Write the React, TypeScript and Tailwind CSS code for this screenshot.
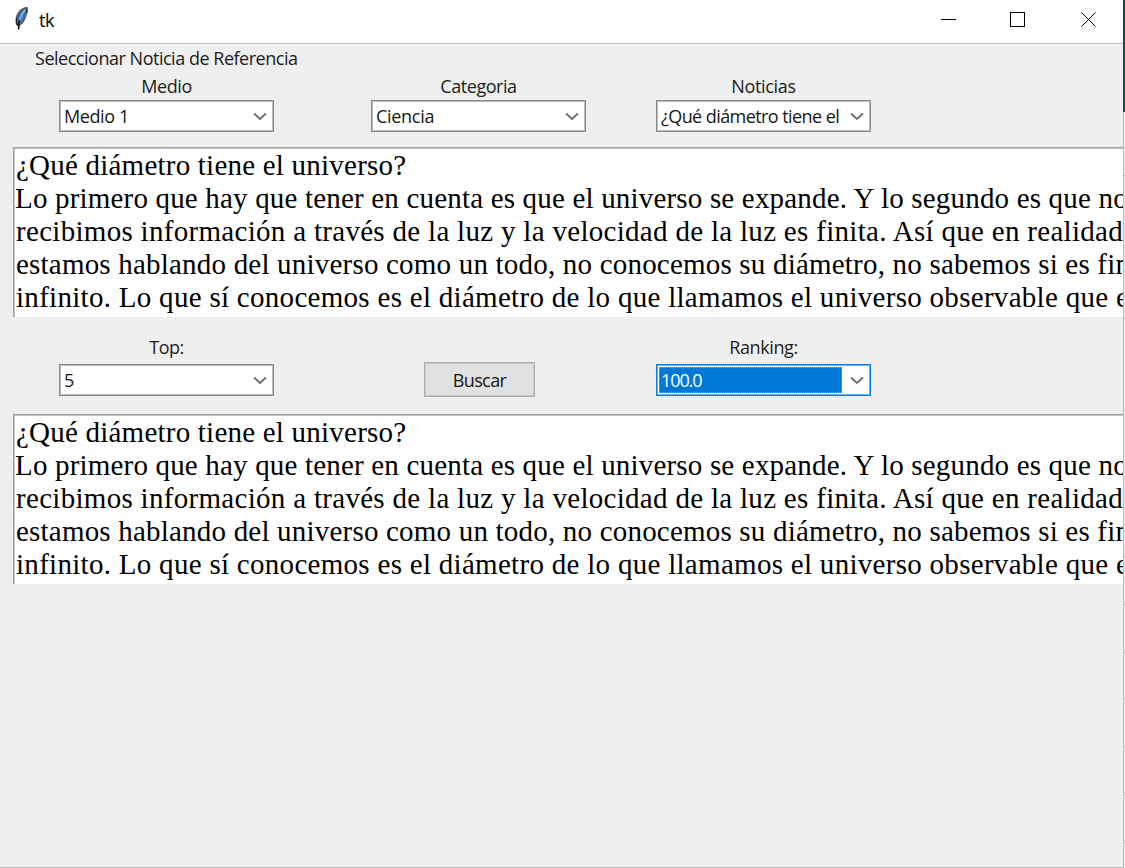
const ui = "font-['Open_Sans','Noto_Sans',sans-serif] text-[18px] whitespace-pre";

function Chevron() {
  return (
    <svg width="14" height="9" viewBox="0 0 14 9" fill="none" className="shrink-0">
      <path d="M1 1.500 L7 7 L13 1.500" stroke="#707070" strokeWidth="1.9" />
    </svg>
  );
}

function Label({ text, className }: { text: string; className: string }) {
  return <div className={`${ui} flex h-6 items-center justify-center leading-6 text-[#1c1c1c] ${className}`}>{text}</div>;
}

function Combo({ value, track }: { value: string; track: string }) {
  return (
    <div className="flex h-8 w-[215px] items-center justify-between border border-[#8b8b8b] bg-white pr-1.5 pl-1 inset-shadow-[0_0_0_1px_#bababa]">
      <span className={`${ui} leading-[26px] text-[#161616] ${track}`}>{value}</span>
      <Chevron />
    </div>
  );
}

const article = [
  { text: "¿Qué diámetro tiene el universo?", track: "tracking-[0.22px]" },
  { text: "Lo primero que hay que tener en cuenta es que el universo se expande. Y lo segundo es que no", track: "tracking-[0.18px] -ml-px" },
  { text: "recibimos información a través de la luz y la velocidad de la luz es finita. Así que en realidad", track: "tracking-[0.3px]" },
  { text: "estamos hablando del universo como un todo, no conocemos su diámetro, no sabemos si es fin", track: "tracking-[0.2px]" },
  { text: "infinito. Lo que sí conocemos es el diámetro de lo que llamamos el universo observable que e", track: "tracking-[0.29px]" },
];

function TextBox() {
  return (
    <div className="ml-[13px] h-[170px] shrink-0 overflow-hidden border-t border-l border-[#a0a0a0] bg-white pt-px pl-0.5 font-['Liberation_Serif',serif] text-[29px] text-black inset-shadow-[1px_1px_0_0_#c4c4c4]">
      {article.map((line) => (
        <div key={line.text} className={`h-[33px] leading-[33px] whitespace-pre ${line.track}`}>{line.text}</div>
      ))}
    </div>
  );
}

function Feather() {
  return (
    <svg width="15" height="25" viewBox="0 0 15 25">
      <path d="M13.500 1 C10 0.500 6 3 3.500 7 C1.500 10 1 15 2 18.500 L4 20 L4.500 24 L6 19.500 C9 18 11.500 14 12.500 9.500 C14 6 14.500 3 13.500 1Z" fill="#555b60" />
      <path d="M12.500 2.500 C8 4 5 7 4 12 L3.500 17 L6 18 C9 15 11 11 11.500 8Z" fill="#3c78bd" />
      <path d="M11.500 3.500 C8 7 6.500 11 5 16" stroke="#8dbdee" strokeWidth="1.500" fill="none" />
      <path d="M5.200 14 L4.500 23.500" stroke="#111" strokeWidth="1.500" />
      <path d="M2.500 12 L2.500 18 L4 20 M12 3 L13 7" stroke="#222" strokeWidth="1" fill="none" />
    </svg>
  );
}

const dividers = [175, 271, 318, 556, 603, 651, 698, 746, 793, 841];

export default function App() {
  return (
    <div className="flex h-[868px] w-[1125px] overflow-hidden bg-[#efefef]">
      <div className="flex h-full w-[1123px] flex-col overflow-hidden border-b border-[#bcbcbc]">
        <header className="flex h-11 shrink-0 items-start border-b border-[#bfc3c1] bg-white">
          <div className="flex h-10 items-center pl-3.5">
            <div className="-mt-1"><Feather /></div>
            <span className="ml-[10px] font-['Open_Sans',sans-serif] text-[18px] leading-6 tracking-[-0.4px] text-black">tk</span>
          </div>
          <svg className="mt-2.5 mr-[26px] ml-auto" width="157" height="20" viewBox="0 0 157 20" fill="none" stroke="#000" strokeWidth="1">
            <path d="M1 9.500 H16" />
            <rect x="70.500" y="2.500" width="14" height="14" />
            <path d="M141.500 2.500 L155.500 16.500 M155.500 2.500 L141.500 16.500" />
          </svg>
        </header>
        <div className="flex h-[30px] shrink-0 pt-0.5 pl-[35px]">
          <Label text="Seleccionar Noticia de Referencia" className="tracking-[-0.48px]" />
        </div>
        <div className="flex h-[73px] shrink-0 pl-[59px]">
          <div className="w-[215px]"><Label text="Medio" className="tracking-[-0.4px]" /><div className="mt-0.5"><Combo value="Medio 1" track="tracking-[-0.4px]" /></div></div>
          <div className="ml-[97px] w-[215px]"><Label text="Categoria" className="tracking-[-0.45px]" /><div className="mt-0.5"><Combo value="Ciencia" track="tracking-[-0.3px]" /></div></div>
          <div className="ml-[70px] w-[215px]"><Label text="Noticias" className="tracking-[-0.3px]" /><div className="mt-0.5"><Combo value="¿Qué diámetro tiene el" track="tracking-[-0.57px]" /></div></div>
        </div>
        <TextBox />
        <div className="flex h-[97px] shrink-0 items-start pt-[18px] pl-[59px]">
          <div className="w-[215px]"><Label text="Top:" className="tracking-[-0.5px]" /><div className="mt-[5px]"><Combo value="5" track="" /></div></div>
          <button className={`${ui} mt-[27px] ml-[150px] h-[35px] w-[111px] border border-[#adadad] bg-[#e1e1e1] leading-[32px] tracking-[-0.6px] text-[#161616] inset-shadow-[0_0_0_1px_#c8c8c8]`}>Buscar</button>
          <div className="ml-[121px] w-[215px]">
            <Label text="Ranking:" className="tracking-[-0.4px]" />
            <div className="mt-[5px] flex h-8 items-center justify-between border border-[#0f7bd8] bg-white pr-1.5 pl-0.5 inset-shadow-[0_0_0_1px_#6fb3ea]">
              <span className={`${ui} h-[26px] w-[183px] border border-dotted border-[#dc914f] bg-[#0078d7] pl-px leading-6 tracking-[-1.1px] text-white`}>100.0</span>
              <Chevron />
            </div>
          </div>
        </div>
        <TextBox />
      </div>
      <div className="flex h-full w-0.5 flex-col">
        <div className="h-[112px] bg-[#04535b]" />
        <svg width="2" height="756" viewBox="0 112 2 756">
          <rect y="112" width="2" height="756" fill="#e9e9e9" />
          <rect y="112" width="1" height="756" fill="#bcbcbc" />
          {dividers.map((y) => <rect key={y} y={y} width="2" height="1" fill="#bcbcbc" />)}
        </svg>
      </div>
    </div>
  );
}
